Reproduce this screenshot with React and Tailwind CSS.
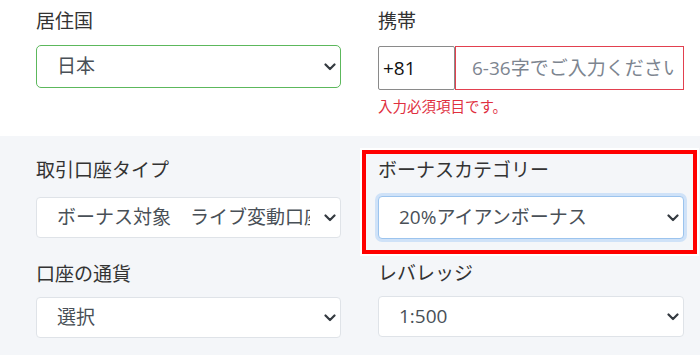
import React from 'react';

const FONT = { fontFamily: '"Open Sans", "Noto Sans CJK JP", sans-serif' };

function Chevron() {
  return (
    <svg width="12" height="8" viewBox="0 0 12 8" className="shrink-0 ml-[14px]">
      <path d="M1.5 1.5l4.5 4.5 4.5-4.5" fill="none" stroke="#343a40" strokeWidth="2.2" strokeLinecap="round" strokeLinejoin="round" />
    </svg>
  );
}

function Select({ value, className = '' }) {
  return (
    <div className={`flex items-center bg-white rounded-[4px] pl-[20px] pr-[4px] text-[19px] text-[#495057] ${className}`}>
      <div className="flex-1 min-w-0 overflow-hidden whitespace-nowrap">{value}</div>
      <Chevron />
    </div>
  );
}

function Label({ children }) {
  return <div className="text-[19px] leading-[26px] text-[#333]">{children}</div>;
}

export default function App() {
  return (
    <div className="w-[700px] h-[355px] overflow-hidden bg-white" style={FONT}>
      {/* top section */}
      <div className="h-[136px] grid grid-cols-[305px_306px] gap-x-[37px] pl-[36px] pt-[8px]">
        <div>
          <Label>居住国</Label>
          <Select value="日本" className="mt-[11px] h-[43px] border border-[#5cb85c] rounded-[5px]" />
        </div>
        <div>
          <Label>携帯</Label>
          <div className="mt-[12px] flex h-[44px]">
            <div className="w-[77px] flex items-center pl-[4px] border border-[#8a8a8a] rounded-[2px] text-[19px] text-[#111]">+81</div>
            <div className="flex-1 min-w-0 flex items-center pl-[16px] pr-[9px] border border-[#e2404f]">
              <div className="flex-1 min-w-0 overflow-hidden whitespace-nowrap text-[19px] text-[#7d8590]">6-36字でご入力ください</div>
            </div>
          </div>
          <div className="mt-[7px] text-[14.5px] leading-[20px] text-[#e0303f]">入力必須項目です。</div>
        </div>
      </div>

      {/* gray section */}
      <div className="h-[219px] bg-[#f4f6f9] grid grid-cols-[305px_306px] gap-x-[37px] pl-[36px] pt-[21px]">
        <div>
          <Label>取引口座タイプ</Label>
          <Select value="ボーナス対象　ライブ変動口座" className="mt-[14px] h-[41px] border border-[#dfe3e8]" />
          <div className="mt-[23px]">
            <Label>口座の通貨</Label>
          </div>
          <Select value="選択" className="mt-[10px] h-[41px] border border-[#dfe3e8]" />
        </div>
        <div>
          <div className="relative">
            <Label>ボーナスカテゴリー</Label>
            <Select value="20%アイアンボーナス" className="mt-[13px] h-[43px] border border-[#9cc4ee] shadow-[0_0_0_3px_#cfe2f8]" />
            <div className="absolute left-[-16px] right-[-13px] top-[-7px] h-[104px] border-[4px] border-[#ff0000] outline outline-2 outline-white" />
          </div>
          <div className="mt-[21px]">
            <Label>レバレッジ</Label>
          </div>
          <Select value="1:500" className="mt-[10px] h-[41px] border border-[#dfe3e8]" />
        </div>
      </div>
    </div>
  );
}
